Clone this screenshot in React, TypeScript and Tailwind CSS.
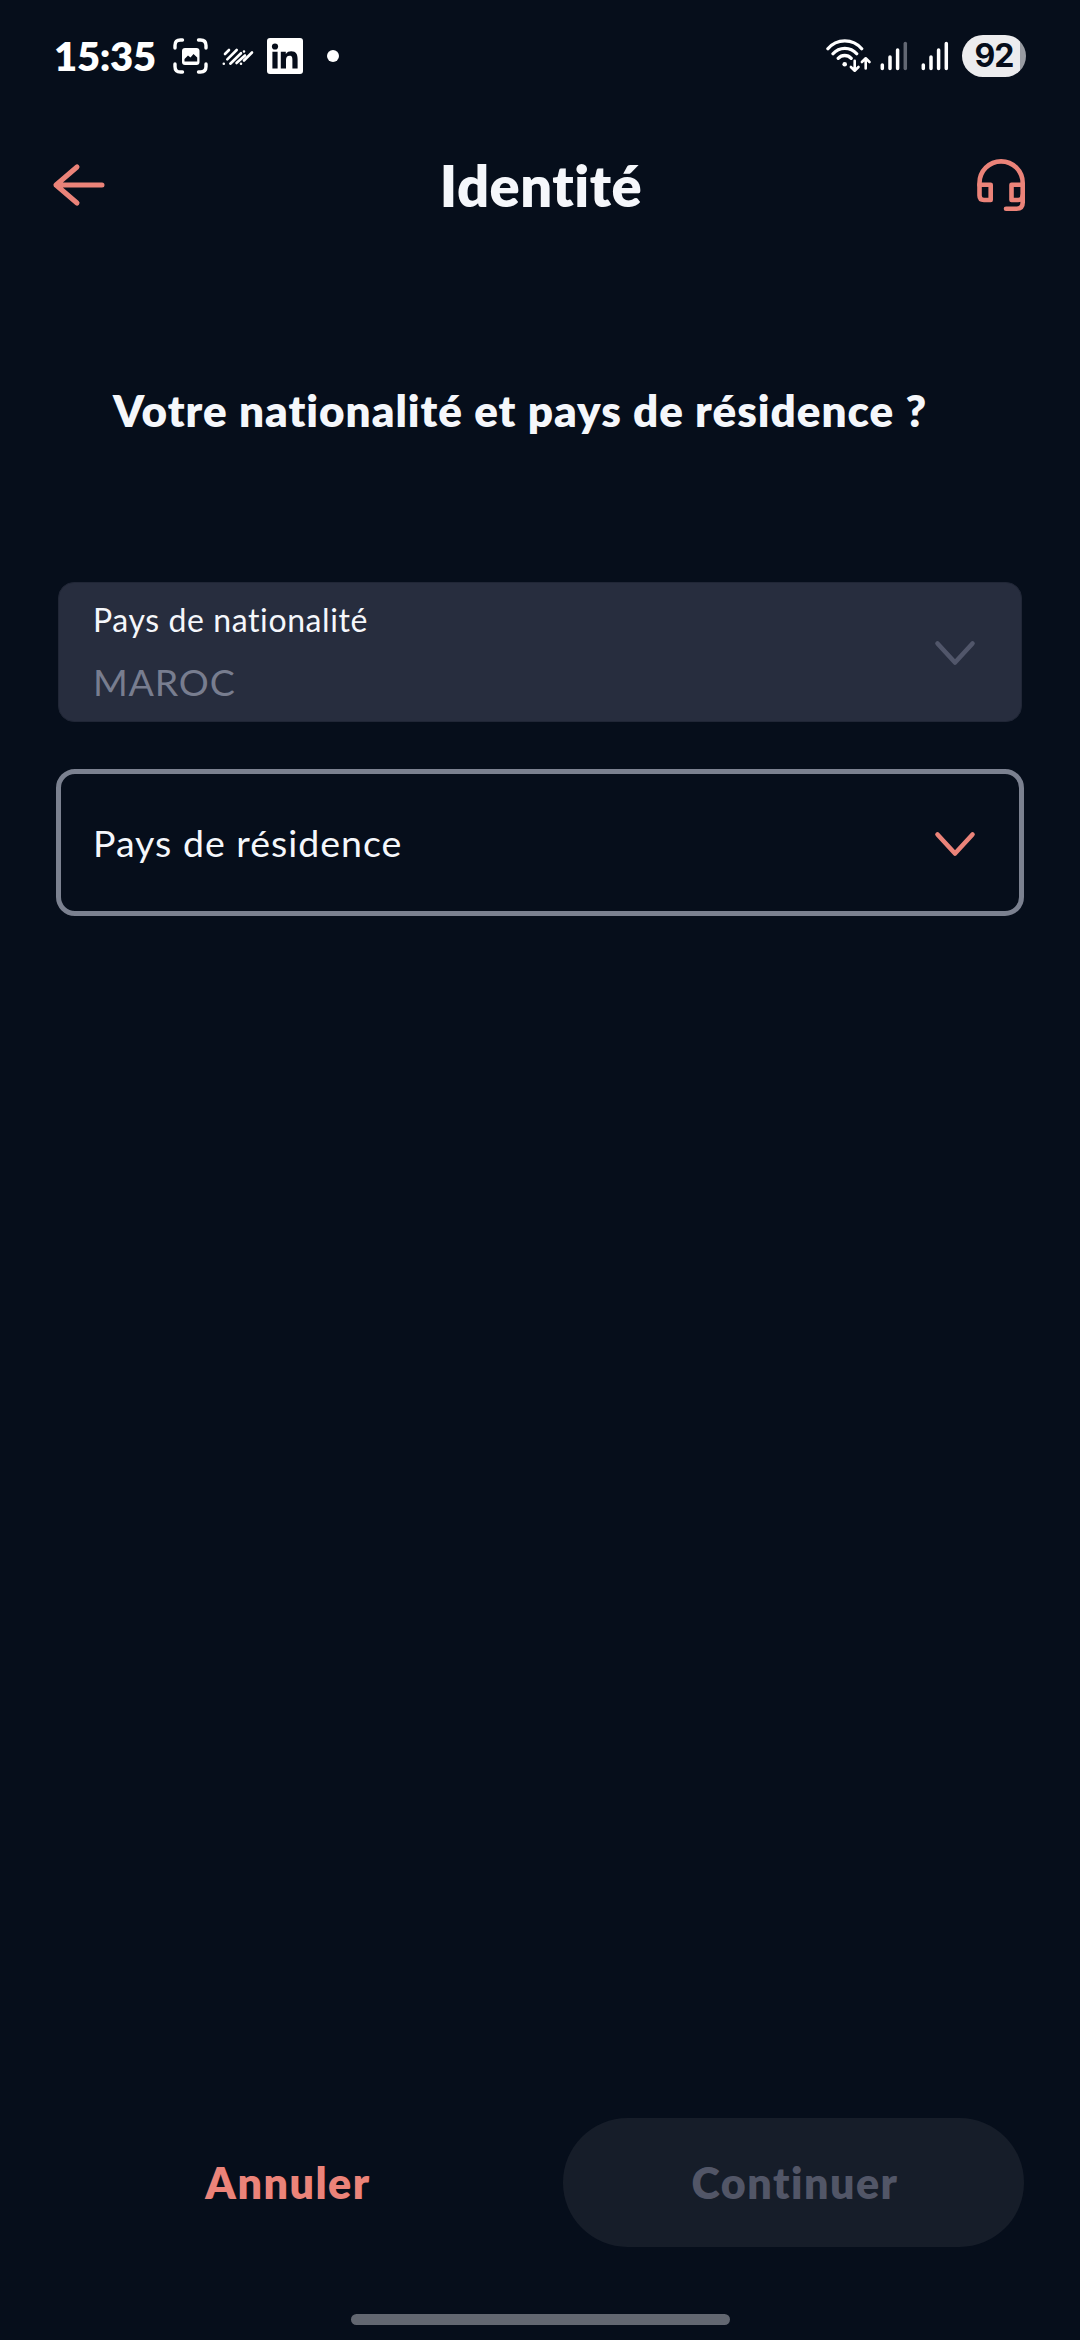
function StatusBar() {
  return (
    <header className="flex h-[112px] shrink-0 items-center pr-[54px] pl-[54px] text-white">
      <span className="w-[106px] text-[40px] leading-none font-extrabold tracking-[-0.3px]">15:35</span>
      <svg className="ml-[13px] h-[36px] w-[36px] shrink-0" viewBox="0 0 36 36" fill="none">
        <path
          d="M2 10V7.500Q2 2 7.500 2H9.500M25.500 2H27.500Q33 2 33 7.500V10M33 26V28.500Q33 34 27.500 34H25.500M9.500 34H7.500Q2 34 2 28.500V26"
          stroke="currentColor"
          strokeWidth="3.400"
          strokeLinecap="round"
        />
        <rect x="9" y="10" width="17.500" height="17" rx="3" fill="currentColor" />
        <path d="M11.500 23.500V21L15 17.500L17.500 19.500L20.500 16L24.200 19.500V23.500Z" fill="#060d1a" />
      </svg>
      <svg className="ml-[13px] h-[20px] w-[33px] shrink-0" viewBox="0 0 33 20" fill="none" stroke="currentColor" strokeWidth="2.600" strokeLinecap="round">
        <path d="M3 8L7 4M1.800 17.700V17.700M5.300 13.300L14.700 4M8.300 17.700L19 7.200M22 5.500V5.500M14.500 17L23 9.500M19 17.700V17.700M22 14.500L30 6.500" />
      </svg>
      <svg className="ml-[12px] h-[36px] w-[36px] shrink-0" viewBox="0 0 36 36">
        <rect width="36" height="36" rx="3" fill="white" />
        <g fill="#060d1a">
          <circle cx="8" cy="8.500" r="3.100" />
          <path d="M5.400 13.700H10.600V30.500H5.400ZM13.800 13.700H18.800V16C20.200 13.800 22 13.200 24.200 13.200C29.200 13.200 30.600 16.500 30.600 21V30.500H25.400V22C25.400 19.700 25.200 17.700 22.600 17.700C19.800 17.700 19 19.800 19 22V30.500H13.800Z" />
        </g>
      </svg>
      <span className="ml-[24px] h-3 w-3 shrink-0 rounded-full bg-white" />

      <div className="ml-auto flex items-center">
        <svg className="h-[36px] w-[48px]" viewBox="0 0 48 36" fill="none" stroke="currentColor" strokeLinecap="round" strokeLinejoin="round">
          <path d="M1.900 10.800A22 22 0 0 1 35.700 10.800M7 15.800A15.500 15.500 0 0 1 30.700 15.800M12.200 20.300A8.900 8.900 0 0 1 25.200 20.300" strokeWidth="3.300" />
          <circle cx="18.700" cy="26.300" r="2.300" fill="currentColor" stroke="none" />
          <path d="M28.700 22.700V32.500M24.900 29L28.700 32.700L32.500 29M39.700 30.500V20.300M35.900 24L39.700 20.300L43.500 24" strokeWidth="2.600" />
        </svg>
        <svg className="ml-[6px] h-[30px] w-[28px]" viewBox="0 0 28 30" stroke="currentColor" strokeWidth="3.500" strokeLinecap="round">
          <path d="M2.300 24V27.500M10 16V27.500M17.600 9V27.500" />
          <path d="M25.300 2.500V27.500" stroke="#626773" />
        </svg>
        <svg className="ml-[13px] h-[30px] w-[28px]" viewBox="0 0 28 30" stroke="currentColor" strokeWidth="3.500" strokeLinecap="round">
          <path d="M2.300 24V27.500M10 16V27.500M17.600 9V27.500M25.300 2.500V27.500" />
        </svg>
        <div className="ml-[13px] flex h-[42px] w-[64px] items-center justify-center rounded-full bg-[linear-gradient(90deg,#ececee_0_58px,#989ba2_58px)] pb-px font-[Inter] text-[32px] font-bold tracking-[-1px] text-[#060d1a]">
          92
        </div>
      </div>
    </header>
  );
}

function TopBar() {
  return (
    <div className="grid h-[146px] shrink-0 grid-cols-[1fr_auto_1fr] items-center px-[50px]">
      <svg className="h-[46px] w-[58px]" viewBox="0 0 58 46" fill="none" stroke="#eb8379" strokeWidth="5" strokeLinecap="round" strokeLinejoin="round">
        <path d="M52 23H6M27 5L6 23L27 41" />
      </svg>
      <h1 className="pt-[2px] pl-[2px] text-[56px] leading-none font-extrabold tracking-[0.5px]">Identité</h1>
      <svg className="h-[54px] w-[54px] justify-self-end" viewBox="0 0 54 54" fill="none" stroke="#eb8379" strokeWidth="4.600" strokeLinecap="round" strokeLinejoin="round">
        <path d="M3.500 27V25A21.600 21.600 0 0 1 46.700 25V44.500Q46.700 50.700 40.500 50.700H30" />
        <path d="M3.500 26.700H14.700V42H8Q3.500 42 3.500 37.500ZM46.700 26.700H35.500V42H42.200Q46.700 42 46.700 37.500" />
      </svg>
    </div>
  );
}

function Chevron({ color }: { color: string }) {
  return (
    <svg className="mt-[2px] h-[28px] w-[42px]" viewBox="0 0 42 28" fill="none" stroke={color} strokeWidth="4.600" strokeLinecap="round" strokeLinejoin="round">
      <path d="M3.500 4.500L21 23.500L38.500 4.500" />
    </svg>
  );
}

export default function App() {
  return (
    <div className="flex h-[2340px] w-[1080px] flex-col overflow-hidden bg-[#060e1b] font-[Lato,sans-serif] text-[#f5f7fb]">
      <StatusBar />
      <TopBar />
      <h2 className="mt-[128px] ml-[113px] text-[44px] leading-[48px] font-extrabold tracking-[1px] whitespace-nowrap">
        Votre nationalité et pays de résidence ?
      </h2>

      <main className="mt-[148px] flex flex-1 flex-col px-[56px]">
        <button className="mx-[2px] flex h-[140px] items-center justify-between rounded-2xl border border-[#202636] bg-[#272d3e] pr-[45px] pl-[34px] text-left">
          <span className="flex flex-col gap-[22px] pb-[3px]">
            <span className="text-[32px] leading-[40px] tracking-[0.600px]">Pays de nationalité</span>
            <span className="text-[37.500px] leading-[40px] tracking-[0.800px] text-[#787d8f]">MAROC</span>
          </span>
          <Chevron color="#51566a" />
        </button>
        <button className="mt-[47px] flex h-[147px] items-center justify-between rounded-[19px] border-[5px] border-[#7b8190] pr-[43px] pl-[32px]">
          <span className="text-[37.500px] leading-[44px] tracking-[1px]">Pays de résidence</span>
          <Chevron color="#eb8379" />
        </button>
      </main>

      <footer className="flex h-[222px] shrink-0 flex-col items-center px-[56px]">
        <div className="flex w-full gap-[45px] text-[43px] leading-none font-extrabold">
          <button className="h-[129px] w-[462px] pl-[2px] tracking-[1.500px] text-[#eb8379]">Annuler</button>
          <button className="h-[129px] flex-1 rounded-full bg-[#161d29] pl-[3px] tracking-[1.500px] text-[#525667]">Continuer</button>
        </div>
        <div className="mt-[67px] h-[11px] w-[379px] rounded-full bg-[#626771]" />
      </footer>
    </div>
  );
}
